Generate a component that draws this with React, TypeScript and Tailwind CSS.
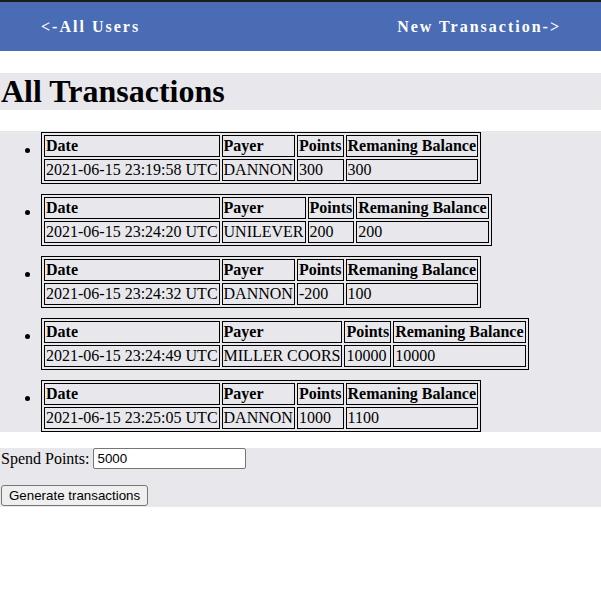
import React from "react";

type Tx = { date: string; payer: string; points: string; balance: string };

const transactions: Tx[] = [
    { date: "2021-06-15 23:19:58 UTC", payer: "DANNON", points: "300", balance: "300" },
    { date: "2021-06-15 23:24:20 UTC", payer: "UNILEVER", points: "200", balance: "200" },
    { date: "2021-06-15 23:24:32 UTC", payer: "DANNON", points: "-200", balance: "100" },
    { date: "2021-06-15 23:24:49 UTC", payer: "MILLER COORS", points: "10000", balance: "10000" },
    { date: "2021-06-15 23:25:05 UTC", payer: "DANNON", points: "1000", balance: "1100" },
];

const cell = "border border-black p-px text-left leading-[18px]";

const TxTable = ({ tx }: { tx: Tx }) => (
    <table className="border-separate border-spacing-[2px] border border-black">
        <tbody>
            <tr>
                <th className={cell + " font-bold"}>Date</th>
                <th className={cell + " font-bold"}>Payer</th>
                <th className={cell + " font-bold"}>Points</th>
                <th className={cell + " font-bold"}>Remaning Balance</th>
            </tr>
            <tr>
                <td className={cell}>{tx.date}</td>
                <td className={cell}>{tx.payer}</td>
                <td className={cell}>{tx.points}</td>
                <td className={cell}>{tx.balance}</td>
            </tr>
        </tbody>
    </table>
);

export default function App() {
    return (
        <div className="min-h-[592px] bg-white text-black text-[16px] font-['Liberation_Serif',serif]">
            {/* top nav */}
            <div className="border-t-2 border-[#1c1c1c] bg-[#4a6cb4] h-[51px] flex items-center justify-between pl-[41px] pr-10 text-white font-bold tracking-[2px]">
                <span>&lt;-All Users</span>
                <span>New Transaction-&gt;</span>
            </div>

            <h1 className="mt-[22px] bg-[#e8e8ec] pl-px text-[32px] font-bold leading-[37px]">All Transactions</h1>

            {/* transaction list */}
            <ul className="mt-[21px] bg-[#e8e8ec] list-disc pl-[41px] pt-px">
                {transactions.map((tx, i) => (
                    <li key={i} className={i < transactions.length - 1 ? "mb-[10px]" : ""}>
                        <TxTable tx={tx} />
                    </li>
                ))}
            </ul>

            {/* spend form */}
            <div className="mt-4 bg-[#e8e8ec] flex flex-col items-start gap-4 pb-px pl-px">
                <div className="flex items-center h-[21px]">
                    <span>Spend Points:</span>
                    <input
                        className="ml-1 w-[153px] h-[21px] border border-[#767676] rounded-[2px] bg-white px-[3px] text-[13.33px] font-['Liberation_Sans',Arial,sans-serif]"
                        defaultValue="5000"
                    />
                </div>
                <button className="h-[21px] px-[7px] border border-[#767676] rounded-[3px] bg-[#efefef] text-[13.33px] font-['Liberation_Sans',Arial,sans-serif]">
                    Generate transactions
                </button>
            </div>
        </div>
    );
}
